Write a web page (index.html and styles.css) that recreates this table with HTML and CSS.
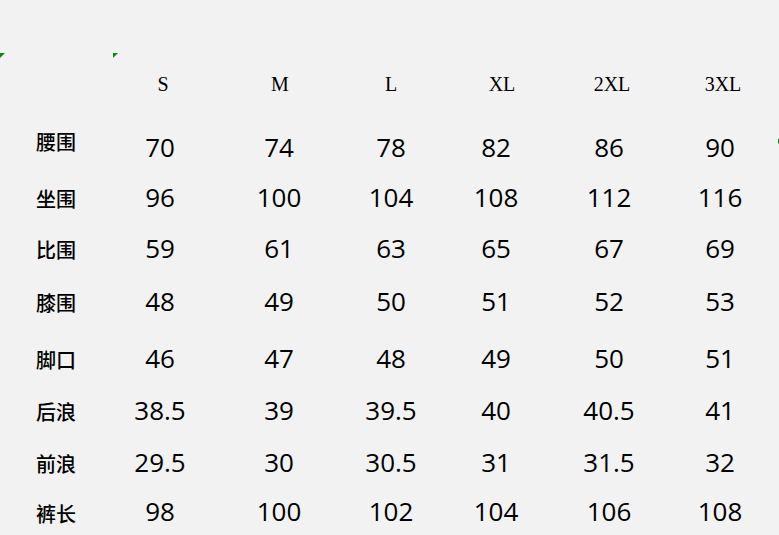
FILE: index.html
```html
<!DOCTYPE html>
<html lang="zh-CN">
<head>
<meta charset="utf-8">
<title>尺码表</title>
<link rel="stylesheet" href="styles.css">
</head>
<body>
<div class="sheet">
  <span class="mark mark-a"></span>
  <span class="mark mark-b"></span>
  <span class="mark mark-c"></span>
  <div class="grid">
    <div class="hd"></div>
    <div class="hd">S</div>
    <div class="hd hd-m">M</div>
    <div class="hd hd-l">L</div>
    <div class="hd hd-xl">XL</div>
    <div class="hd">2XL</div>
    <div class="hd">3XL</div>

    <div class="lab lab-up">腰围</div>
    <div class="num">70</div><div class="num">74</div><div class="num">78</div><div class="num">82</div><div class="num">86</div><div class="num">90</div>

    <div class="lab">坐围</div>
    <div class="num">96</div><div class="num">100</div><div class="num">104</div><div class="num">108</div><div class="num">112</div><div class="num">116</div>

    <div class="lab">比围</div>
    <div class="num">59</div><div class="num">61</div><div class="num">63</div><div class="num">65</div><div class="num">67</div><div class="num">69</div>

    <div class="lab">膝围</div>
    <div class="num">48</div><div class="num">49</div><div class="num">50</div><div class="num">51</div><div class="num">52</div><div class="num">53</div>

    <div class="lab">脚口</div>
    <div class="num">46</div><div class="num">47</div><div class="num">48</div><div class="num">49</div><div class="num">50</div><div class="num">51</div>

    <div class="lab">后浪</div>
    <div class="num">38.5</div><div class="num">39</div><div class="num">39.5</div><div class="num">40</div><div class="num">40.5</div><div class="num">41</div>

    <div class="lab">前浪</div>
    <div class="num">29.5</div><div class="num">30</div><div class="num">30.5</div><div class="num">31</div><div class="num">31.5</div><div class="num">32</div>

    <div class="lab lab-dn">裤长</div>
    <div class="num">98</div><div class="num">100</div><div class="num">102</div><div class="num">104</div><div class="num">106</div><div class="num">108</div>
  </div>
</div>
</body>
</html>
```
FILE: styles.css
```css
html, body {
  margin: 0;
  padding: 0;
  overflow: hidden;
  background: #f2f2f2;
}

.sheet {
  position: relative;
  width: 779px;
  height: 535px;
  padding-top: 59px;
  box-sizing: border-box;
  color: #000;
}

.grid {
  display: grid;
  grid-template-columns: 104px 112px 126px 98px 112px 114px 108px;
  grid-template-rows: 63px 50px 51px 53px 57px 52px 52px 49px 50px;
}

.grid > div {
  align-self: start;
  height: 50px;
  line-height: 50px;
  white-space: nowrap;
}

.hd {
  font-family: "Liberation Serif", "DejaVu Serif", serif;
  font-size: 20px;
  text-align: center;
  padding-left: 6px;
}

.hd-m { padding-left: 2px; }
.hd-l { padding-left: 0; }
.hd-xl { padding-left: 12px; }

.lab {
  font-family: "Noto Sans CJK SC", "Noto Sans", sans-serif;
  font-size: 20px;
  font-weight: 500;
  padding-left: 36px;
}

.grid > .lab { line-height: 53px; }
.grid > .lab-up { line-height: 40px; }
.grid > .lab-dn { line-height: 56px; }

.num {
  font-family: "Open Sans", "Noto Sans", sans-serif;
  font-size: 26px;
  text-align: center;
}

.mark {
  position: absolute;
  width: 0;
  height: 0;
  border-top: 5px solid #0a8a0a;
  border-right: 5px solid transparent;
}

.mark-a { left: 0; top: 53px; }
.mark-b { left: 113px; top: 53px; }
.mark-c { left: 778px; top: 139px; }
```
